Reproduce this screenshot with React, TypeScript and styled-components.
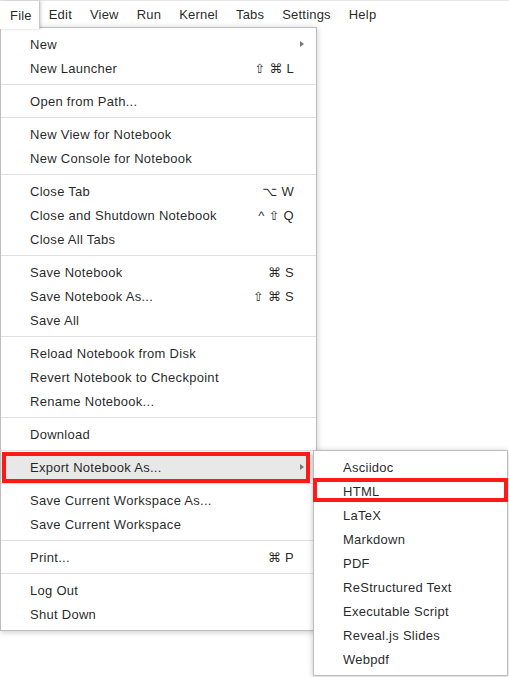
import React from "react";
import styled, { createGlobalStyle } from "styled-components";

const GlobalStyle = createGlobalStyle`
  html, body { margin: 0; padding: 0; background: #ffffff; }
  body {
    font-family: "Liberation Sans", Arial, "DejaVu Sans", sans-serif;
    font-size: 13px;
    color: rgba(0, 0, 0, 0.87);
  }
`;

const Page = styled.div`
  position: relative;
  width: 509px;
  height: 677px;
  overflow: hidden;
  background: #ffffff;
`;

const MenuBar = styled.div`
  display: flex;
  height: 28px;
  padding-left: 1px;
  border-top: 1px solid #e6e6e6;
  background: #ffffff;
  box-sizing: border-box;
`;

const BarItem = styled.div<{ $active?: boolean }>`
  display: flex;
  align-items: center;
  padding: 1px 9px 0;
  margin-left: ${(p) => (p.$active ? "-1px" : "0")};
  padding-left: ${(p) => (p.$active ? "10px" : "9px")};
  padding-right: ${(p) => (p.$active ? "7px" : "9px")};
  height: ${(p) => (p.$active ? "28px" : "26px")};
  box-sizing: border-box;
  background: ${(p) => (p.$active ? "#ffffff" : "transparent")};
  border-right: ${(p) => (p.$active ? "1px solid #c8c8c8" : "none")};
  box-shadow: ${(p) => (p.$active ? "1px 0 3px rgba(0,0,0,0.18)" : "none")};
  position: relative;
  z-index: ${(p) => (p.$active ? 3 : 0)};
  color: rgba(0, 0, 0, 0.87);
  font-size: 13px;
  letter-spacing: 0.2px;
`;

const Menu = styled.div<{ $left: number; $top: number; $width: number }>`
  position: absolute;
  left: ${(p) => p.$left}px;
  top: ${(p) => p.$top}px;
  width: ${(p) => p.$width}px;
  box-sizing: border-box;
  padding: 4px 0;
  background: #ffffff;
  border: 1px solid #bdbdbd;
  box-shadow: 0 1px 6px rgba(0, 0, 0, 0.22);
  z-index: 2;
`;

const Item = styled.div<{ $hover?: boolean }>`
  display: flex;
  align-items: center;
  height: 24px;
  padding: 0 8px 0 29px;
  background: ${(p) => (p.$hover ? "#e8e8e8" : "transparent")};
  color: rgba(0, 0, 0, 0.87);
  font-size: 13px;
  letter-spacing: 0.28px;
  white-space: nowrap;
`;

const Label = styled.span`
  flex: 1;
`;

const Shortcut = styled.span`
  font-family: "Liberation Sans", "DejaVu Sans", sans-serif;
  letter-spacing: 0.3px;
`;

const ArrowCell = styled.span`
  width: 14px;
  display: flex;
  justify-content: flex-end;
  padding-right: 4px;
  box-sizing: border-box;
`;

const Arrow = styled.span`
  width: 0;
  height: 0;
  border-left: 4px solid #777;
  border-top: 3px solid transparent;
  border-bottom: 3px solid transparent;
`;

const Separator = styled.div`
  height: 1px;
  margin: 4px 0;
  background: #e0e0e0;
`;

const Annotation = styled.div<{ $x: number; $y: number; $w: number; $h: number }>`
  position: absolute;
  left: ${(p) => p.$x}px;
  top: ${(p) => p.$y}px;
  width: ${(p) => p.$w}px;
  height: ${(p) => p.$h}px;
  box-sizing: border-box;
  border: 4px solid #ff1a1a;
  z-index: 5;
  pointer-events: none;
`;

type Entry =
  | { label: string; shortcut?: string; sub?: boolean; hover?: boolean }
  | "sep";

const fileMenu: Entry[] = [
  { label: "New", sub: true },
  { label: "New Launcher", shortcut: "⇧ ⌘ L" },
  "sep",
  { label: "Open from Path..." },
  "sep",
  { label: "New View for Notebook" },
  { label: "New Console for Notebook" },
  "sep",
  { label: "Close Tab", shortcut: "⌥ W" },
  { label: "Close and Shutdown Notebook", shortcut: "^ ⇧ Q" },
  { label: "Close All Tabs" },
  "sep",
  { label: "Save Notebook", shortcut: "⌘ S" },
  { label: "Save Notebook As...", shortcut: "⇧ ⌘ S" },
  { label: "Save All" },
  "sep",
  { label: "Reload Notebook from Disk" },
  { label: "Revert Notebook to Checkpoint" },
  { label: "Rename Notebook..." },
  "sep",
  { label: "Download" },
  "sep",
  { label: "Export Notebook As...", sub: true, hover: true },
  "sep",
  { label: "Save Current Workspace As..." },
  { label: "Save Current Workspace" },
  "sep",
  { label: "Print...", shortcut: "⌘ P" },
  "sep",
  { label: "Log Out" },
  { label: "Shut Down" },
];

const exportMenu = [
  "Asciidoc",
  "HTML",
  "LaTeX",
  "Markdown",
  "PDF",
  "ReStructured Text",
  "Executable Script",
  "Reveal.js Slides",
  "Webpdf",
];

const barItems = ["File", "Edit", "View", "Run", "Kernel", "Tabs", "Settings", "Help"];

export default function App() {
  return (
    <Page>
      <GlobalStyle />
      <MenuBar>
        {barItems.map((b, i) => (
          <BarItem key={b} $active={i === 0}>
            {b}
          </BarItem>
        ))}
      </MenuBar>

      <Menu $left={0} $top={27} $width={317}>
        {fileMenu.map((e, i) =>
          e === "sep" ? (
            <Separator key={i} />
          ) : (
            <Item key={i} $hover={e.hover}>
              <Label>{e.label}</Label>
              {e.shortcut && <Shortcut>{e.shortcut}</Shortcut>}
              <ArrowCell>{e.sub && <Arrow />}</ArrowCell>
            </Item>
          )
        )}
      </Menu>

      <Menu $left={313} $top={450} $width={195}>
        {exportMenu.map((l) => (
          <Item key={l}>
            <Label>{l}</Label>
          </Item>
        ))}
      </Menu>

      <Annotation $x={2} $y={452} $w={308} $h={31} />
      <Annotation $x={313} $y={478} $w={195} $h={24} />
    </Page>
  );
}
